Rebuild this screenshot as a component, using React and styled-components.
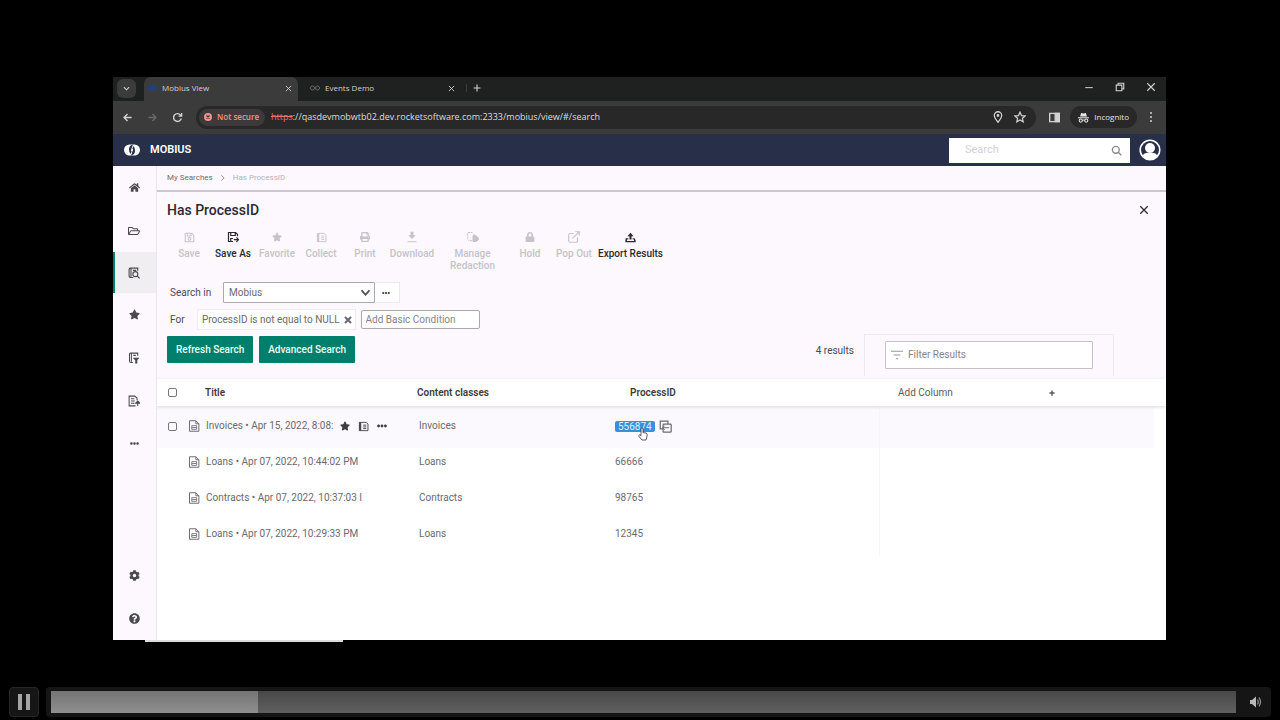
import React from "react";
import styled, { createGlobalStyle } from "styled-components";
import {
  FaCog,
  FaEllipsisH,
  FaHome,
  FaLock,
  FaPrint,
  FaQuestionCircle,
  FaRegFolderOpen,
  FaRegSave,
  FaStar,
} from "react-icons/fa";
import { FiExternalLink } from "react-icons/fi";

const COLORS = {
  NAVY: "#272f49",
  GREEN: "#00806c",
  PANEL: "#fcf8fe",
  TEXT: "#2b2b30",
  MUTED: "#6b6a70",
  DISABLED: "#c6c2c9",
  CHROME: "#3b3b3c",
  CHROME_DARK: "#1f2020",
  OMNIBOX: "#282829",
};

const GlobalStyle = createGlobalStyle`
  * {
    box-sizing: border-box;
  }
  body {
    margin: 0;
    background: #000;
    font-family: Roboto, "Liberation Sans", sans-serif;
    font-size: 10px;
    line-height: 14px;
    color: ${COLORS.TEXT};
  }
  button, input, select {
    font: inherit;
    color: inherit;
    margin: 0;
  }
  button {
    padding: 0;
    border: 0;
    background: none;
  }
  a {
    color: inherit;
    text-decoration: none;
  }
  svg {
    display: block;
    flex: none;
  }
`;

const Page = styled.div`
  display: flex;
  flex-direction: column;
  min-height: 100vh;
`;

const Stage = styled.div`
  display: flex;
  flex-direction: column;
  flex: 1;
  padding: 77px 114px 45px 113px;
`;

const Window = styled.div`
  display: flex;
  flex-direction: column;
  flex: 1;
`;

const WindowEdge = styled.div`
  width: 198px;
  height: 2px;
  margin-left: 32px;
  background: #dcdcdc;
`;

/* browser */

const TabStrip = styled.div`
  display: flex;
  align-items: center;
  height: 24px;
  background: ${COLORS.CHROME_DARK};
  color: #d0d0d0;
  font-family: "Open Sans", "Noto Sans", sans-serif;
  font-size: 8px;
`;

const TabMenu = styled.button`
  display: flex;
  align-items: center;
  justify-content: center;
  width: 19px;
  height: 19px;
  margin: 0 8px 2px 4px;
  border-radius: 6px;
  background: ${COLORS.CHROME};
`;

const Tab = styled.div`
  display: flex;
  align-items: center;
  gap: 5px;
  width: ${(props) => (props.$active ? 154 : 168)}px;
  height: 24px;
  padding: ${(props) => (props.$active ? "0 6px 2px 3px" : "0 11px 2px 12px")};
  border-radius: 7px 7px 0 0;
  background: ${(props) => (props.$active ? COLORS.CHROME : "none")};
`;

const TabTitle = styled.span`
  flex: 1;
`;

const NewTab = styled.button`
  padding: 0 6px 0 6px;
  margin-bottom: 2px;
  border-left: 1px solid #3c3c3c;
`;

const WindowControls = styled.div`
  display: flex;
  gap: 21px;
  margin-left: auto;
  padding: 0 10px 4px 0;
`;

const AddressRow = styled.div`
  display: flex;
  align-items: center;
  height: 33px;
  padding: 0 10px 1px 9px;
  background: ${COLORS.CHROME};
  color: #d2d2d2;
  font-family: "Open Sans", "Noto Sans", sans-serif;
`;

const NavButtons = styled.div`
  display: flex;
  gap: 14px;
  padding-right: 13px;
`;

const Omnibox = styled.div`
  display: flex;
  align-items: center;
  flex: 1;
  height: 23px;
  padding: 0 10px 0 3px;
  border-radius: 12px;
  background: ${COLORS.OMNIBOX};
`;

const NotSecure = styled.span`
  display: flex;
  align-items: center;
  gap: 5px;
  height: 17px;
  margin-right: 6px;
  padding: 0 6px 0 5px;
  border-radius: 9px;
  background: #3e3a3b;
  color: #f0928c;
  font-size: 8px;
  font-weight: 600;
`;

const Url = styled.span`
  flex: 1;
  color: #dedede;
  font-size: 9px;
  s {
    color: #e8706a;
  }
`;

const OmniboxIcons = styled.span`
  display: flex;
  gap: 10px;
`;

const Incognito = styled.span`
  display: flex;
  align-items: center;
  gap: 5px;
  height: 22px;
  margin: 0 9px 0 10px;
  padding: 0 8px;
  border-radius: 11px;
  background: ${COLORS.OMNIBOX};
  color: #e4e4e4;
  font-size: 8px;
`;

const SidePanel = styled.span`
  padding-left: 13px;
`;

/* application frame */

const AppBar = styled.header`
  display: flex;
  align-items: center;
  gap: 9px;
  height: 32px;
  padding: 0 5px 0 10px;
  background: ${COLORS.NAVY};
  color: #fff;
`;

const Brand = styled.span`
  flex: 1;
  font-size: 11px;
  font-weight: 600;
`;

const SearchBox = styled.label`
  display: flex;
  align-items: center;
  width: 181px;
  height: 25px;
  padding: 0 8px 0 16px;
  background: #fff;
  color: #8b8990;
`;

const PlainInput = styled.input`
  flex: 1;
  min-width: 0;
  padding: 0;
  border: 0;
  outline: 0;
  background: none;
  font-size: ${(props) => props.$size || 10}px;
  &::placeholder {
    color: ${(props) => props.$hint || "#85838a"};
    opacity: 1;
  }
`;

const AppBody = styled.div`
  display: flex;
  flex: 1;
  background: #fff;
`;

const SideNav = styled.nav`
  display: flex;
  flex-direction: column;
  width: 44px;
  border-right: 1px solid #ebe6ed;
  background: ${COLORS.PANEL};
  color: #4a494f;
`;

const SideLink = styled.a`
  display: flex;
  align-items: center;
  justify-content: center;
  height: ${(props) => (props.$active ? 41 : 43)}px;
  padding-right: 3px;
  border-left: 2px solid ${(props) => (props.$active ? COLORS.GREEN : "transparent")};
  background: ${(props) => (props.$active ? "#f1eef2" : "none")};
`;

const SideSpacer = styled.div`
  flex: 1;
`;

const Main = styled.main`
  flex: 1;
  min-width: 0;
  overflow: hidden;
`;

const Panel = styled.section`
  padding-bottom: 3px;
  background: ${COLORS.PANEL};
`;

const Breadcrumb = styled.div`
  display: flex;
  align-items: center;
  gap: 7px;
  height: 26px;
  padding-left: 10px;
  border-bottom: 2px solid #cbc7cd;
  color: #6e6d73;
  font-size: 8px;
  span {
    color: #b5b1b8;
  }
`;

const TitleRow = styled.div`
  display: flex;
  align-items: center;
  justify-content: space-between;
  height: 35px;
  padding: 0 17px 0 10px;
`;

const Title = styled.h1`
  margin: 0;
  font-size: 14px;
  font-weight: 500;
`;

const Toolbar = styled.div`
  display: flex;
  align-items: flex-start;
  padding: 3px 10px 0;
`;

const Tool = styled.button`
  display: flex;
  flex-direction: column;
  align-items: center;
  gap: 4px;
  width: ${(props) => props.$width || 44}px;
  color: ${(props) => (props.disabled ? COLORS.DISABLED : "#2a2a2e")};
  font-weight: 500;
  line-height: 12px;
`;

const ToolIcon = styled.span`
  display: flex;
  align-items: center;
  height: 14px;
`;

const Form = styled.div`
  display: flex;
  flex-direction: column;
  gap: 6px;
  padding: 10px 13px 4px;
`;

const FormRow = styled.div`
  display: flex;
  align-items: center;
  height: 21px;
  color: #4b4a50;
`;

const ScopeLabel = styled.label`
  width: 53px;
`;

const ForLabel = styled.label`
  width: 27px;
`;

const SelectWrap = styled.span`
  display: flex;
  align-items: center;
  width: 152px;
  height: 21px;
  padding-right: 4px;
  border: 1px solid #aaa7ad;
  border-radius: 1px;
  background: #fff;
`;

const Select = styled.select`
  flex: 1;
  height: 19px;
  padding: 0 5px;
  border: 0;
  outline: 0;
  appearance: none;
  background: none;
  color: ${COLORS.MUTED};
`;

const MoreButton = styled.button`
  display: flex;
  align-items: center;
  justify-content: center;
  width: 25px;
  height: 21px;
  padding-right: 3px;
  border: 1px solid #ece8ee;
  border-left: 0;
  background: #fff;
`;

const Chip = styled.span`
  display: flex;
  align-items: center;
  gap: 4px;
  height: 21px;
  margin-right: 5px;
  padding: 0 3px 0 4px;
  border: 1px solid #efebf1;
  background: #fff;
  color: ${COLORS.MUTED};
  white-space: nowrap;
`;

const ConditionInput = styled(PlainInput)`
  flex: none;
  width: 119px;
  height: 19px;
  padding: 0 4px;
  border: 1px solid #aaa7ad;
  border-radius: 2px;
  background: #fff;
`;

const ActionRow = styled.div`
  display: flex;
  align-items: flex-start;
  gap: 6px;
  padding: 0 52px 0 10px;
`;

const ActionButton = styled.button`
  height: 27px;
  margin-top: 2px;
  padding: 0 9px;
  border-radius: 1px;
  background: ${COLORS.GREEN};
  color: #e8fffa;
  font-weight: 500;
`;

const ResultCount = styled.span`
  margin: 10px 4px 0 auto;
  color: #4b4a50;
`;

const FilterFrame = styled.div`
  padding: 6px 20px 7px;
  border: 1px solid #eee9f0;
  border-bottom: 0;
`;

const FilterBox = styled.label`
  display: flex;
  align-items: center;
  gap: 5px;
  width: 208px;
  height: 28px;
  padding: 0 5px;
  border: 1px solid #c5c1c8;
  border-radius: 1px;
  background: #fff;
  color: #96939a;
`;

/* results */

const Results = styled.table`
  width: 100%;
  border-spacing: 0;
  table-layout: fixed;
`;

const Head = styled.thead`
  position: relative;
  box-shadow: 0 1px 3px #dad7dc;
`;

const Heading = styled.th`
  height: 27px;
  padding: 0 0 0 ${(props) => props.$indent || 0}px;
  background: #fff;
  color: #3d3c42;
  font-weight: ${(props) => (props.$light ? 400 : 600)};
  text-align: left;
`;

const Row = styled.tr`
  background: ${(props) => (props.$selected ? "#fbf8fe" : "#fff")};
`;

const Cell = styled.td`
  height: ${(props) => (props.$selected ? 42 : 36)}px;
  padding: ${(props) => (props.$selected ? 13 : 7)}px 0 0 ${(props) => props.$indent || 0}px;
  color: ${COLORS.MUTED};
  vertical-align: top;
  white-space: nowrap;
`;

const LastCell = styled(Cell)`
  border-left: 1px solid #f7f5f8;
  border-right: 12px solid #fff;
`;

const Inline = styled.div`
  display: flex;
  align-items: center;
  gap: ${(props) => props.$gap}px;
  height: 14px;
`;

const DocTools = styled.span`
  display: flex;
  align-items: center;
  gap: 8px;
  color: #3d3c42;
`;

const Checkbox = styled.input`
  display: block;
  width: 9px;
  height: 9px;
  border: 1px solid #77757b;
  border-radius: 2px;
  appearance: none;
  background: #fff;
`;

const PickedValue = styled.span`
  position: relative;
  padding: 0 3px;
  border-radius: 2px;
  background: #3b8edb;
  color: #d8f0ff;
  line-height: 11px;
`;

const Pointer = styled.svg`
  position: absolute;
  top: 6px;
  right: 7px;
`;

const AddColumn = styled.button`
  display: flex;
  align-items: center;
  justify-content: space-between;
  width: 157px;
  color: #5d5c62;
`;

/* player */

const Player = styled.div`
  display: flex;
  gap: 7px;
  padding: 0 9px 3px;
`;

const PauseButton = styled.button`
  display: flex;
  align-items: center;
  justify-content: center;
  width: 30px;
  height: 30px;
  border: 1px solid #262626;
  border-radius: 4px;
  background: #161616;
`;

const SeekBar = styled.div`
  display: flex;
  align-items: center;
  flex: 1;
  height: 30px;
  padding-left: 5px;
  border-radius: 4px;
  background: #151515;
`;

const Seek = styled.input`
  flex: 1;
  height: 22px;
  appearance: none;
  background:
    linear-gradient(#747474, #8f8f8f) 0 0 / ${(props) => props.value}% 100% no-repeat,
    linear-gradient(#484848, #606060);
  &::-webkit-slider-thumb {
    width: 1px;
    height: 22px;
    appearance: none;
    background: none;
  }
`;

const VolumeButton = styled.button`
  display: flex;
  justify-content: center;
  width: 35px;
  padding-left: 4px;
`;

const Stroke = ({ size = 10, width = 2, children, ...rest }) => (
  <svg
    width={size}
    height={size}
    viewBox="0 0 16 16"
    fill="none"
    stroke="currentColor"
    strokeWidth={width}
    aria-hidden="true"
    {...rest}
  >
    {children}
  </svg>
);

const CloseIcon = ({ size = 7, width = 2 }) => (
  <Stroke size={size} width={width}>
    <path d="M2 2l12 12M14 2L2 14" />
  </Stroke>
);

const DocIcon = () => (
  <Stroke size={12} width={1.3}>
    <path d="M2 1h8.500l4 4v10H2zM10.500 1v4h4" />
    <path d="M5 7.500h6.500v5H5zM5 10h6.500" strokeWidth="1.100" />
  </Stroke>
);

const SearchPageIcon = () => (
  <Stroke size={12} width={1.5}>
    <path d="M7 14H4.500q-3 0-3-2V3q0-1.500 1.500-1.500H13V5M4 2v11M6.500 4.500H11" />
    <circle cx="9.800" cy="9.500" r="3.300" />
    <path d="M12.200 12l3.300 3.300" />
  </Stroke>
);

const FilterPageIcon = () => (
  <Stroke size={12} width={1.4}>
    <path d="M6.500 14H4q-2 0-2-2V3q0-1.500 1.500-1.500H13V5M4.500 2v11M7 4.500h3.500" />
    <path d="M7 8h7.500L12 11v4h-2v-4z" fill="currentColor" strokeWidth="0.800" />
  </Stroke>
);

const AddPageIcon = () => (
  <Stroke size={12} width={1.4}>
    <path d="M10 14.500H1.500v-13H9L12 4v3M4 5h4.500M4 8h5M4 11h4.500" />
    <path d="M13 14.500V8M10 11l3-3 3 3z" fill="currentColor" />
  </Stroke>
);

const SaveAsIcon = () => (
  <Stroke size={12} width={1.6}>
    <path d="M8 14H2V2h9.500L14 4.500V7M5 2v4h6V2M5 14v-4h3" />
    <path d="M9 11.500h6M12.500 8.500l3 3-3 3" />
  </Stroke>
);

const CollectIcon = () => (
  <Stroke size={11} width={1.3}>
    <path d="M4.500 2H12l2.500 2.500V14h-10M7.500 6H12M7.500 8.500H12M7.500 11H12" />
    <path d="M2 2h2v12H2z" fill="currentColor" />
  </Stroke>
);

const DownloadIcon = () => (
  <svg width="12" height="12" viewBox="0 0 16 16" fill="currentColor" aria-hidden="true">
    <path d="M6 1h4v4.500h3L8 10.500 3 5.500h3zM2 13.500h12V15H2z" />
  </svg>
);

const RedactIcon = () => (
  <Stroke size={12} width={1.3}>
    <path d="M7 13H2.500L1 11V2h6l3 3" strokeDasharray="3 1" />
    <path d="M8 6h3.500L15 9v3l-3 2H8z" fill="currentColor" />
  </Stroke>
);

const ExportIcon = () => (
  <svg width="11" height="11" viewBox="0 0 16 16" fill="currentColor" aria-hidden="true">
    <path d="M8 1l4.500 5H9.500v5h-3V6h-3z" />
    <path d="M1 9h4v1.500H3.500L2.500 13h11l-1-2.500H11V9h3l1.500 3.500V15H.5v-2.500z" />
  </svg>
);

const CopyIcon = () => (
  <Stroke size={13} width={1.5}>
    <path d="M5 11H1.500V1.500H11V5" />
    <rect x="5" y="5" width="10" height="10" rx="1" />
    <path d="M12.500 9.500H4.500M7 7L4.500 9.500 7 12" strokeWidth="1.200" />
  </Stroke>
);

const FilterIcon = () => (
  <Stroke size={12} width={1.6}>
    <path d="M0 3h16M3.500 8h9M6.500 13h3" />
  </Stroke>
);

const SearchIcon = () => (
  <Stroke size={11} width={2}>
    <circle cx="7" cy="7" r="5" />
    <path d="M10.500 10.500L15 15" />
  </Stroke>
);

const LogoIcon = () => (
  <svg width="18" height="12" viewBox="0 0 18 12" aria-hidden="true">
    <rect x="1" y="0.500" width="16" height="11" rx="5.500" fill="#fff" />
    <path d="M10 0.500Q5.500 1.500 6 6q.2 2.500 1.500 4L8.700 7.200 7.800 6.500zM8 11.500Q12.500 10.500 12 6q-.2-2.500-1.500-4L9.300 4.800l.9.700z" fill={COLORS.NAVY} />
  </svg>
);

const AvatarIcon = () => (
  <svg width="22" height="22" viewBox="0 0 22 22" aria-hidden="true">
    <circle cx="11" cy="11" r="9.800" fill={COLORS.NAVY} stroke="#fff" strokeWidth="1.600" />
    <path d="M3.500 17c1-2.500 3-3 5-3.300h5c2 .3 4 .8 5 3.300-2 2.500-4.500 3.700-7.500 3.700S5.500 19.500 3.500 17z" fill="#fff" />
    <circle cx="11" cy="9" r="5" fill="#fff" />
  </svg>
);

const IncognitoIcon = () => (
  <svg width="11" height="11" viewBox="0 0 16 16" fill="currentColor" aria-hidden="true">
    <path d="M4.500 1.500L8 2.300l3.500-.8L13 6.500H3zM0 7.500h16V9H0z" />
    <g fill="none" stroke="currentColor" strokeWidth="1.600">
      <circle cx="4" cy="12.500" r="2.300" />
      <circle cx="12" cy="12.500" r="2.300" />
      <path d="M6.300 12.200q1.700-1 3.400 0" />
    </g>
  </svg>
);

const Browser = () => (
  <>
    <TabStrip>
      <TabMenu aria-label="Search tabs">
        <Stroke size={7} width={2.5}>
          <path d="M2 5l6 6 6-6" />
        </Stroke>
      </TabMenu>
      <Tab $active>
        <svg width="10" height="6" viewBox="0 0 10 6" aria-hidden="true">
          <rect width="10" height="6" rx="3" fill="#233f73" />
        </svg>
        <TabTitle>Mobius View</TabTitle>
        <button aria-label="Close Mobius View">
          <CloseIcon />
        </button>
      </Tab>
      <Tab>
        <svg width="10" height="6" viewBox="0 0 10 6" fill="none" stroke="#666" aria-hidden="true">
          <rect x="0.500" y="1" width="4" height="4" rx="2" />
          <rect x="5.500" y="1" width="4" height="4" rx="2" />
        </svg>
        <TabTitle>Events Demo</TabTitle>
        <button aria-label="Close Events Demo">
          <CloseIcon />
        </button>
      </Tab>
      <NewTab aria-label="New tab">
        <Stroke size={8} width={2.2}>
          <path d="M8 1v14M1 8h14" />
        </Stroke>
      </NewTab>
      <WindowControls>
        <button aria-label="Minimize">
          <Stroke size={10} width={1.6}>
            <path d="M2 9h12" />
          </Stroke>
        </button>
        <button aria-label="Restore">
          <Stroke size={10} width={1.8}>
            <path d="M2 5h9v9H2zM5 5V2h9v9h-3" />
          </Stroke>
        </button>
        <button aria-label="Close">
          <CloseIcon size={10} width={1.8} />
        </button>
      </WindowControls>
    </TabStrip>
    <AddressRow>
      <NavButtons>
        <button aria-label="Back">
          <Stroke size={11}>
            <path d="M14 8H3M8 3L3 8l5 5" />
          </Stroke>
        </button>
        <button aria-label="Forward" disabled>
          <Stroke size={11} stroke="#6a6a6a">
            <path d="M2 8h11M8 3l5 5-5 5" />
          </Stroke>
        </button>
        <button aria-label="Reload">
          <Stroke size={11}>
            <path d="M13.500 9.500A5.700 5.700 0 1 1 12.500 4.500L14 6M14 1.500V6H9.500" />
          </Stroke>
        </button>
      </NavButtons>
      <Omnibox>
        <NotSecure>
          <svg width="8" height="8" viewBox="0 0 16 16" aria-hidden="true">
            <circle cx="8" cy="8" r="8" fill="#f0928c" />
            <path d="M5 5l6 6M11 5l-6 6" stroke="#3e3a3b" strokeWidth="2.500" />
          </svg>
          Not secure
        </NotSecure>
        <Url>
          <s>https</s>://qasdevmobwtb02.dev.rocketsoftware.com:2333/mobius/view/#/search
        </Url>
        <OmniboxIcons>
          <Stroke size={12} width={1.7}>
            <path d="M8 15C5 11 3 9 3 6a5 5 0 0 1 10 0c0 3-2 5-5 9z" />
            <circle cx="8" cy="6" r="1" />
          </Stroke>
          <Stroke size={12} width={1.6}>
            <path d="M8 1.500l2 4.600 4.900.4-3.700 3.200 1.100 4.800L8 12l-4.300 2.500 1.100-4.800L1.100 6.500 6 6.100z" />
          </Stroke>
        </OmniboxIcons>
      </Omnibox>
      <SidePanel>
        <Stroke size={11} width={2}>
          <path d="M1 2h14v12H1z" />
          <path d="M9 2h6v12H9z" fill="currentColor" />
        </Stroke>
      </SidePanel>
      <Incognito>
        <IncognitoIcon />
        Incognito
      </Incognito>
      <button aria-label="Browser menu">
        <svg width="10" height="12" viewBox="0 0 10 12" fill="currentColor" aria-hidden="true">
          <circle cx="5" cy="2" r="1" />
          <circle cx="5" cy="6" r="1" />
          <circle cx="5" cy="10" r="1" />
        </svg>
      </button>
    </AddressRow>
  </>
);

const TOOLS = [
  { label: "Save", icon: <FaRegSave size={11} /> },
  { label: "Save As", icon: <SaveAsIcon />, enabled: true },
  { label: "Favorite", icon: <FaStar size={10} /> },
  { label: "Collect", icon: <CollectIcon /> },
  { label: "Print", icon: <FaPrint size={10} /> },
  { label: "Download", icon: <DownloadIcon />, width: 50 },
  { label: "Manage Redaction", icon: <RedactIcon />, width: 71 },
  { label: "Hold", icon: <FaLock size={10} /> },
  { label: "Pop Out", icon: <FiExternalLink size={14} /> },
  { label: "Export Results", icon: <ExportIcon />, width: 69, enabled: true },
];

const ROWS = [
  { name: "Invoices • Apr 15, 2022, 8:08:", type: "Invoices", id: "556874", selected: true },
  { name: "Loans • Apr 07, 2022, 10:44:02 PM", type: "Loans", id: "66666" },
  { name: "Contracts • Apr 07, 2022, 10:37:03 I", type: "Contracts", id: "98765" },
  { name: "Loans • Apr 07, 2022, 10:29:33 PM", type: "Loans", id: "12345" },
];

const Sidebar = () => (
  <SideNav>
    <SideLink href="#home" aria-label="Home">
      <FaHome size={11} />
    </SideLink>
    <SideLink href="#folders" aria-label="Folders">
      <FaRegFolderOpen size={12} />
    </SideLink>
    <SideLink href="#search" aria-label="Searches" $active>
      <SearchPageIcon />
    </SideLink>
    <SideLink href="#favorites" aria-label="Favorites">
      <FaStar size={11} />
    </SideLink>
    <SideLink href="#filters" aria-label="Filters">
      <FilterPageIcon />
    </SideLink>
    <SideLink href="#add" aria-label="Add document">
      <AddPageIcon />
    </SideLink>
    <SideLink href="#more" aria-label="More">
      <FaEllipsisH size={9} />
    </SideLink>
    <SideSpacer />
    <SideLink href="#settings" aria-label="Settings">
      <FaCog size={11} />
    </SideLink>
    <SideLink href="#help" aria-label="Help">
      <FaQuestionCircle size={11} />
    </SideLink>
  </SideNav>
);

const SearchForm = () => (
  <Form>
    <FormRow>
      <ScopeLabel htmlFor="scope">Search in</ScopeLabel>
      <SelectWrap>
        <Select id="scope">
          <option>Mobius</option>
        </Select>
        <Stroke size={9} width={3}>
          <path d="M1 4l7 8 7-8" />
        </Stroke>
      </SelectWrap>
      <MoreButton aria-label="More scopes">
        <FaEllipsisH size={8} />
      </MoreButton>
    </FormRow>
    <FormRow>
      <ForLabel htmlFor="condition">For</ForLabel>
      <Chip>
        ProcessID is not equal to NULL
        <button aria-label="Remove condition">
          <CloseIcon size={8} width={4} />
        </button>
      </Chip>
      <ConditionInput id="condition" placeholder="Add Basic Condition" />
    </FormRow>
  </Form>
);

const ResultRow = ({ row }) => (
  <Row $selected={row.selected}>
    <Cell $selected={row.selected} $indent={11}>
      {row.selected && (
        <Inline>
          <Checkbox type="checkbox" aria-label={`Select ${row.type}`} />
        </Inline>
      )}
    </Cell>
    <Cell $selected={row.selected}>
      <Inline $gap={6}>
        <DocIcon />
        {row.name}
        {row.selected && (
          <DocTools>
            <FaStar size={10} />
            <CollectIcon />
            <FaEllipsisH size={10} />
          </DocTools>
        )}
      </Inline>
    </Cell>
    <Cell $selected={row.selected} $indent={17}>
      {row.type}
    </Cell>
    <Cell $selected={row.selected} $indent={15}>
      {row.selected ? (
        <Inline $gap={4}>
          <PickedValue>
            {row.id}
            <Pointer width="10" height="14" viewBox="0 0 10 14">
              <path
                d="M3 8V2q0-1.200 1-1.200T5 2v3.500l3 .6q1.300.3 1.200 1.600L8.600 11 8 13H4L1 9.500Q.4 8.400 1.500 8q.7-.2 1.500.8z"
                fill="#fff"
                stroke="#333"
                strokeWidth="0.800"
              />
            </Pointer>
          </PickedValue>
          <button aria-label="Copy value">
            <CopyIcon />
          </button>
        </Inline>
      ) : (
        row.id
      )}
    </Cell>
    <LastCell $selected={row.selected} />
  </Row>
);

const ResultTable = () => (
  <Results>
    <colgroup>
      <col width="31" />
      <col width="214" />
      <col width="198" />
      <col width="279" />
      <col />
    </colgroup>
    <Head>
      <tr>
        <Heading $indent={11}>
          <Checkbox type="checkbox" aria-label="Select all" />
        </Heading>
        <Heading $indent={17}>Title</Heading>
        <Heading $indent={15}>Content classes</Heading>
        <Heading $indent={30}>ProcessID</Heading>
        <Heading $indent={19} $light>
          <AddColumn>
            Add Column
            <Stroke size={6} width={4}>
              <path d="M8 1v14M1 8h14" />
            </Stroke>
          </AddColumn>
        </Heading>
      </tr>
    </Head>
    <tbody>
      {ROWS.map((row) => (
        <ResultRow key={row.id} row={row} />
      ))}
    </tbody>
  </Results>
);

export default () => (
  <Page>
    <GlobalStyle />
    <Stage>
      <Window>
        <Browser />
        <AppBar>
          <LogoIcon />
          <Brand>MOBIUS</Brand>
          <SearchBox>
            <PlainInput placeholder="Search" aria-label="Search" $size={11} $hint="#d3d0d6" />
            <SearchIcon />
          </SearchBox>
          <button aria-label="Account">
            <AvatarIcon />
          </button>
        </AppBar>
        <AppBody>
          <Sidebar />
          <Main>
            <Panel>
              <Breadcrumb>
                <a href="#searches">My Searches</a>
                <Stroke size={6} width={2}>
                  <path d="M4 1l7 7-7 7" />
                </Stroke>
                <span>Has ProcessID</span>
              </Breadcrumb>
              <TitleRow>
                <Title>Has ProcessID</Title>
                <button aria-label="Close search">
                  <CloseIcon size={10} width={2} />
                </button>
              </TitleRow>
              <Toolbar>
                {TOOLS.map((tool) => (
                  <Tool key={tool.label} $width={tool.width} disabled={!tool.enabled}>
                    <ToolIcon>{tool.icon}</ToolIcon>
                    {tool.label}
                  </Tool>
                ))}
              </Toolbar>
              <SearchForm />
              <ActionRow>
                <ActionButton>Refresh Search</ActionButton>
                <ActionButton>Advanced Search</ActionButton>
                <ResultCount>4 results</ResultCount>
                <FilterFrame>
                  <FilterBox>
                    <FilterIcon />
                    <PlainInput placeholder="Filter Results" aria-label="Filter Results" />
                  </FilterBox>
                </FilterFrame>
              </ActionRow>
            </Panel>
            <ResultTable />
          </Main>
        </AppBody>
      </Window>
      <WindowEdge />
    </Stage>
    <Player>
      <PauseButton aria-label="Pause">
        <svg width="14" height="18" viewBox="0 0 14 18" fill="#a4a4a4" aria-hidden="true">
          <rect x="1" y="1" width="4" height="16" />
          <rect x="9" y="1" width="4" height="16" />
        </svg>
      </PauseButton>
      <SeekBar>
        <Seek type="range" min="0" max="100" step="0.1" value={17.5} readOnly aria-label="Seek" />
        <VolumeButton aria-label="Mute">
          <svg width="12" height="12" viewBox="0 0 12 12" fill="#b8b8b8" aria-hidden="true">
            <path d="M0 4h2l4-3.500v11L2 8H0z" />
            <path d="M7.500 3.500q1.500 2.500 0 5M9 1.500q3 4.500 0 9" fill="none" stroke="#8a8a8a" strokeWidth="1.300" />
          </svg>
        </VolumeButton>
      </SeekBar>
    </Player>
  </Page>
);
